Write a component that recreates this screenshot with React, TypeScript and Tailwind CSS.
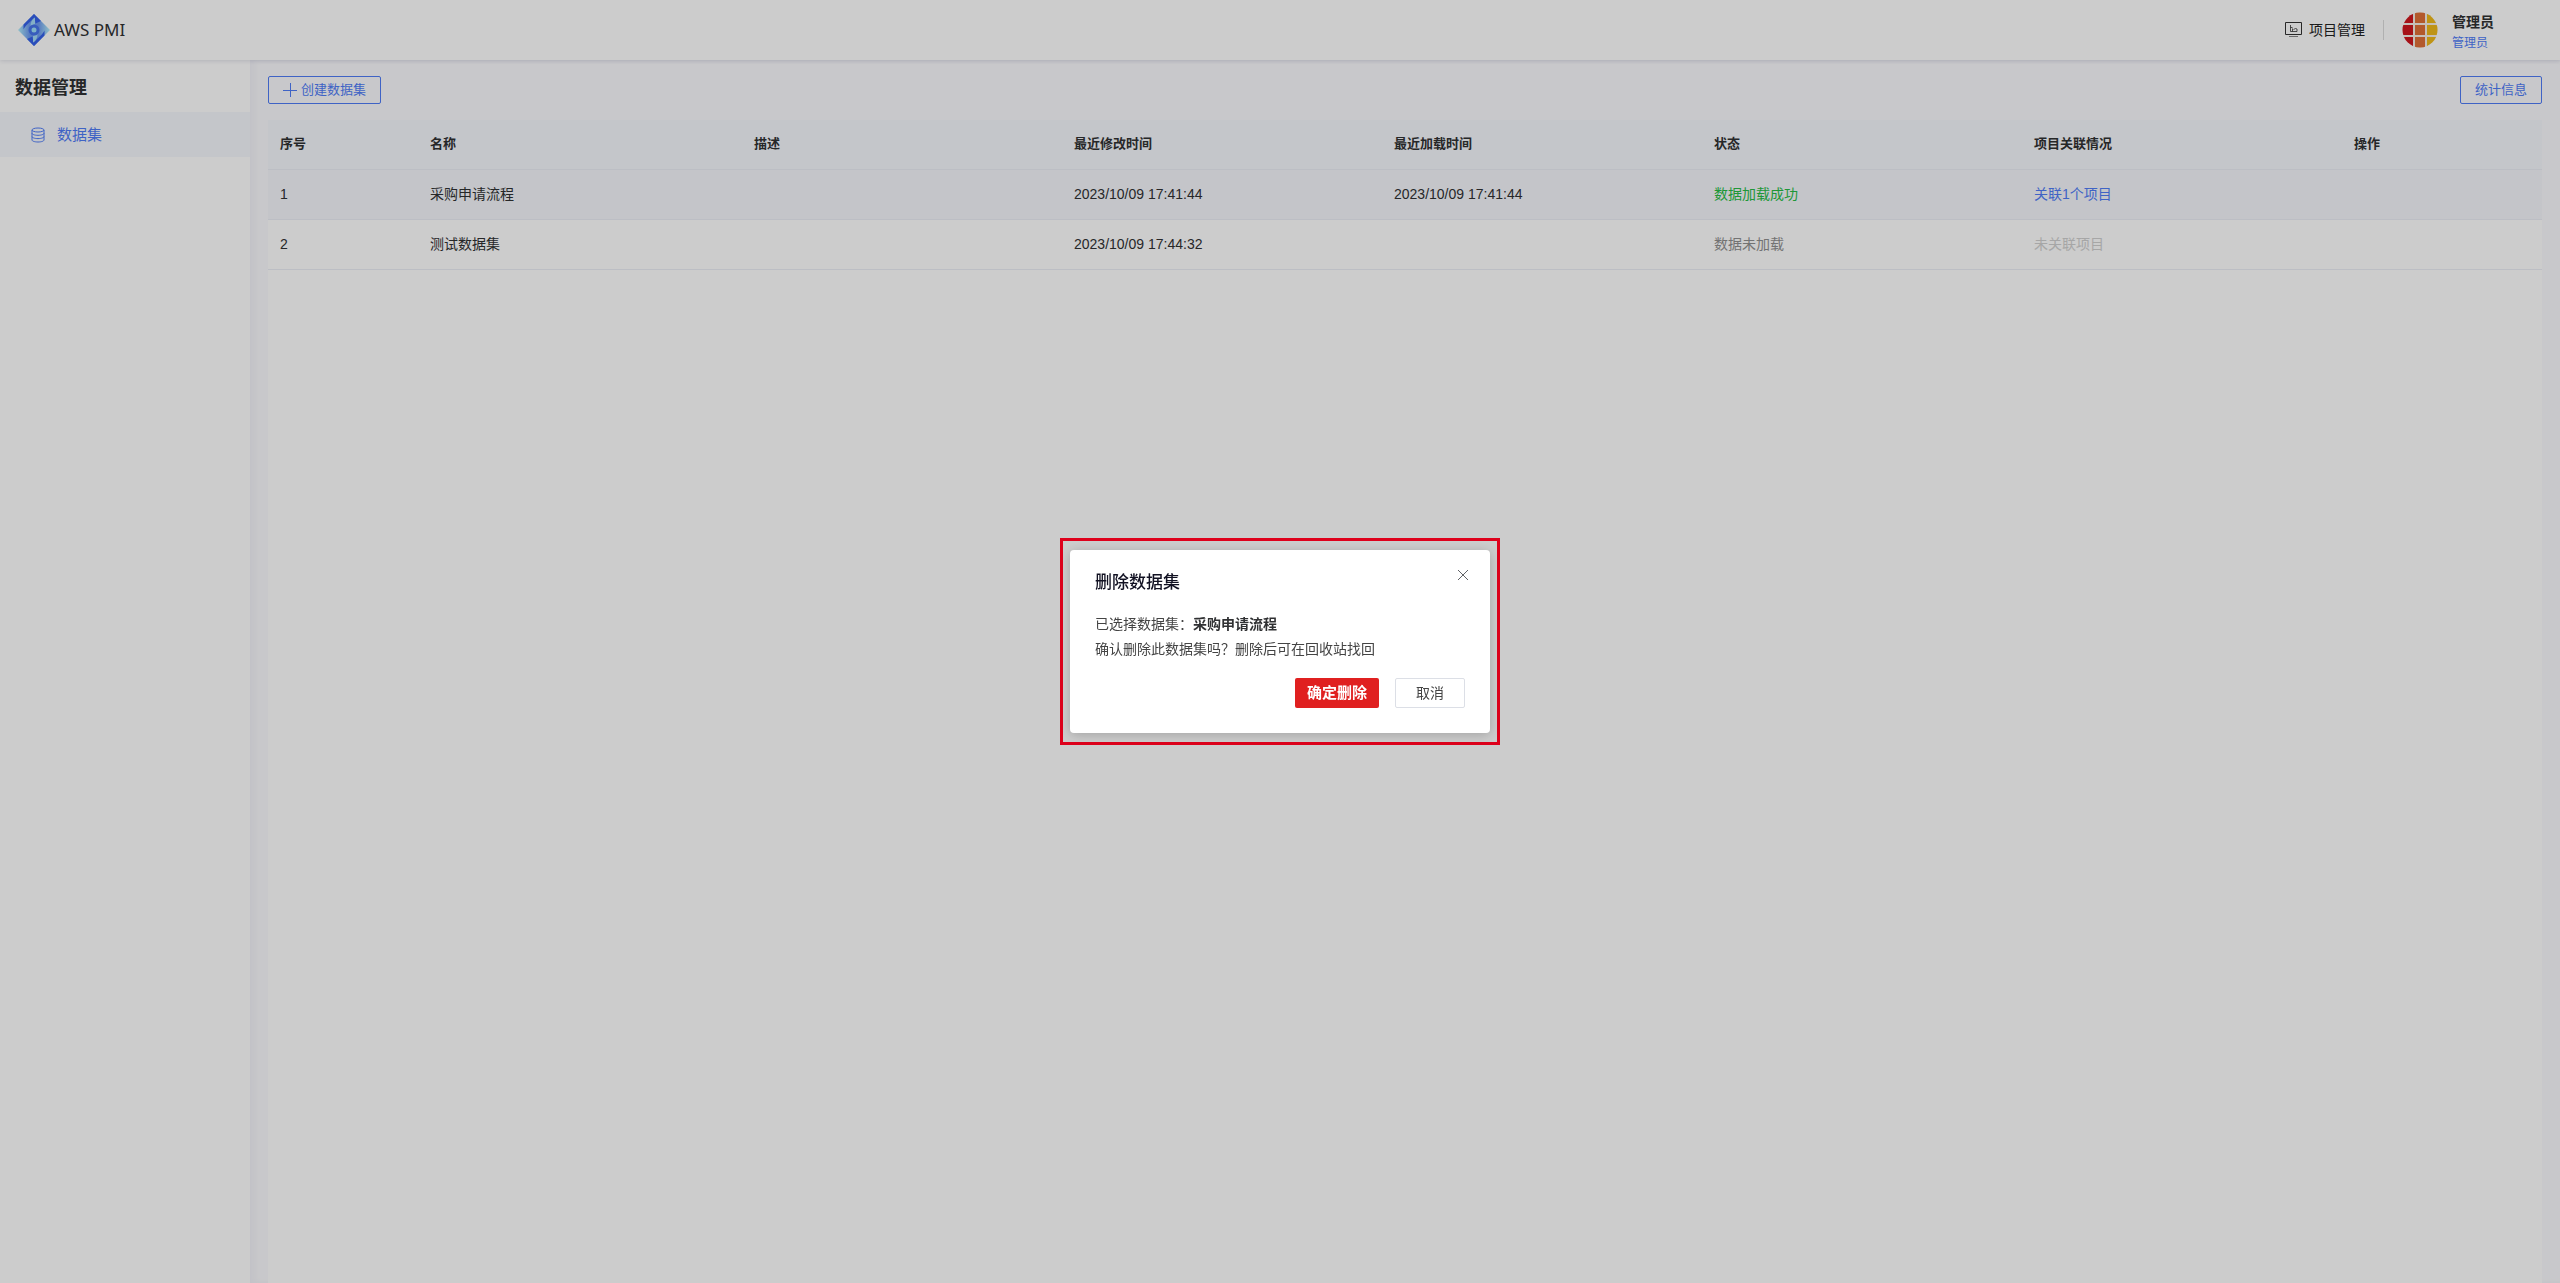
import React, { useState } from 'react';

interface DataSet {
  id: number;
  name: string;
  description: string;
  updatedAt: string;
  loadedAt: string;
  loaded: boolean;
  projects: number;
}

const DATA_SETS: DataSet[] = [
  { id: 1, name: '采购申请流程', description: '', updatedAt: '2023/10/09 17:41:44', loadedAt: '2023/10/09 17:41:44', loaded: true, projects: 1 },
  { id: 2, name: '测试数据集', description: '', updatedAt: '2023/10/09 17:44:32', loadedAt: '', loaded: false, projects: 0 },
];

const COLUMNS = [
  { label: '序号', width: 'w-[150px]' },
  { label: '名称', width: 'w-[324px]' },
  { label: '描述', width: '' },
  { label: '最近修改时间', width: '' },
  { label: '最近加载时间', width: '' },
  { label: '状态', width: '' },
  { label: '项目关联情况', width: '' },
  { label: '操作', width: 'w-[200px]' },
];

function Logo() {
  return (
    <svg width="32" height="32" viewBox="0 0 32 32" aria-hidden="true">
      <defs>
        <linearGradient id="logoBase" x1="0" y1="0" x2="1" y2="0">
          <stop offset="0" stopColor="#b4f0fb" />
          <stop offset="0.35" stopColor="#6f9cf0" />
          <stop offset="0.65" stopColor="#6f9cf0" />
          <stop offset="1" stopColor="#b4f0fb" />
        </linearGradient>
      </defs>
      <path d="M16 0 32 16 16 32 0 16z" fill="url(#logoBase)" />
      <path d="M16 0 5.5 10.5v5C7 12 11 9 16.500 3.500l1 6 5.500-2.500z" fill="#3561ea" />
      <path d="M16 32l10.500-10.500v-5C25 20 21 23 15.500 28.500l-1-6L9 25z" fill="#3561ea" />
      <path d="M17 3.500c-3 2-4.500 4.500-4.500 8.500l4.500-2z" fill="#a5dcf8" />
      <path d="M15 28.500c3-2 4.500-4.500 4.500-8.500L15 22z" fill="#a5dcf8" />
      <circle cx="16" cy="16" r="4" fill="#9fe0fa" stroke="#4674ec" strokeWidth="3" />
    </svg>
  );
}

function Avatar() {
  return (
    <svg width="36" height="36" viewBox="0 0 36 36" aria-hidden="true">
      <defs>
        <clipPath id="avatarClip">
          <circle cx="18" cy="18" r="17.5" />
        </clipPath>
      </defs>
      <g clipPath="url(#avatarClip)">
        <rect width="36" height="36" fill="#f7efe8" />
        <path d="M0 0h11v11H0zM0 13h11v10H0zM0 25h11v11H0z" fill="#d0171f" />
        <path d="M13 0h10v11H13zM13 13h10v10H13zM13 25h10v11H13z" fill="#e07038" />
        <path d="M25 0h11v11H25zM25 13h11v10H25zM25 25h11v11H25z" fill="#efb91b" />
      </g>
    </svg>
  );
}

function ProjectIcon() {
  return (
    <svg width="17" height="16" viewBox="0 0 17 16" fill="none" stroke="#333333" aria-hidden="true">
      <path d="M.5.5h16v12H.5z" />
      <path d="M5.5 3v6.500h6.500M5.500 5.500h2M7.500 6.500v3M8.500 7.500l2-1 1.500.500v2.500" strokeOpacity="0.8" />
      <path d="M4 14.500h9" strokeOpacity="0.6" />
    </svg>
  );
}

function DataIcon() {
  return (
    <svg width="14" height="16" viewBox="0 0 14 16" fill="none" stroke="#4f7cf7" aria-hidden="true">
      <ellipse cx="7" cy="3" rx="6" ry="2" />
      <path d="M1 3v10c0 1.100 2.700 2 6 2s6-.9 6-2V3" />
      <path d="M1 6.300c0 1.100 2.700 2 6 2s6-.9 6-2M1 9.600c0 1.100 2.700 2 6 2s6-.9 6-2" />
    </svg>
  );
}

function Header() {
  return (
    <header className="relative z-10 flex h-[60px] items-center bg-white pl-[18px] pr-[66px] shadow-[0_1px_4px_rgba(40,50,100,0.15)]">
      <Logo />
      <span className="ml-1 font-['Noto_Sans',sans-serif] text-[17px] text-[#303133]">AWS PMI</span>
      <a href="#projects" className="ml-auto flex items-center gap-[7px] text-[#222222]">
        <ProjectIcon />
        <span>项目管理</span>
      </a>
      <div className="ml-[18px] h-5 w-px bg-[#dcdcdc]" />
      <div className="ml-[18px] flex items-center gap-[14px]">
        <Avatar />
        <div className="flex flex-col pt-[3px]">
          <span className="text-sm leading-[22px] font-bold text-[#303133]">管理员</span>
          <span className="text-xs leading-5 text-[#4f7cf7]">管理员</span>
        </div>
      </div>
    </header>
  );
}

function Sidebar() {
  return (
    <aside className="w-[250px] shrink-0 bg-white">
      <h2 className="flex h-[52px] items-center px-[15px] pt-[3px] text-lg font-bold text-[#303133]">数据管理</h2>
      <nav>
        <a href="#datasets" className="flex h-[45px] items-center gap-3 bg-[#f6f8fd] pl-[31px] text-[15px] text-[#4f7cf7]">
          <DataIcon />
          <span>数据集</span>
        </a>
      </nav>
    </aside>
  );
}

function DataSetTable({ rows, activeId }: { rows: DataSet[]; activeId: number }) {
  return (
    <table className="w-full table-fixed border-collapse text-left text-sm text-[#303133]">
      <thead>
        <tr className="h-[49px] border-b border-[#ebeef5] bg-[#f6f8fd]">
          {COLUMNS.map((col) => (
            <th key={col.label} className={`px-3 text-[13px] font-bold ${col.width}`}>{col.label}</th>
          ))}
        </tr>
      </thead>
      <tbody>
        {rows.map((row) => (
          <tr key={row.id} className={`h-[50px] border-b border-[#ebeef5] ${row.id === activeId ? 'bg-[#f5f7fc]' : 'bg-white'}`}>
            <td className="px-3">{row.id}</td>
            <td className="px-3">{row.name}</td>
            <td className="px-3">{row.description}</td>
            <td className="px-3">{row.updatedAt}</td>
            <td className="px-3">{row.loadedAt}</td>
            <td className={`px-3 ${row.loaded ? 'text-[#27bd45]' : 'text-[#909090]'}`}>
              {row.loaded ? '数据加载成功' : '数据未加载'}
            </td>
            <td className="px-3">
              {row.projects > 0 ? (
                <a href="#related" className="text-[#4f7cf7]">关联{row.projects}个项目</a>
              ) : (
                <span className="text-[#d0d0d0]">未关联项目</span>
              )}
            </td>
            <td className="px-3" />
          </tr>
        ))}
      </tbody>
    </table>
  );
}

function DeleteDialog({ name, onClose }: { name: string; onClose: () => void }) {
  return (
    <div className="fixed inset-0 z-20 flex items-center justify-center bg-black/20">
      <div className="border-[3px] border-[#de001b] px-[7px] py-[9px]">
        <div role="dialog" aria-labelledby="dialog-title" className="w-[420px] rounded bg-white px-[25px] pt-4 pb-[25px] shadow-[0_2px_12px_rgba(0,0,0,0.2)]">
          <div className="flex items-start justify-between">
            <h3 id="dialog-title" className="pt-[3px] text-[17px] leading-7 font-medium text-[#111122]">删除数据集</h3>
            <button onClick={onClose} aria-label="关闭" className="mr-[-7px] p-[3px]">
              <svg width="12" height="12" viewBox="0 0 12 12" stroke="#606266">
                <path d="M1 1l10 10M11 1 1 11" />
              </svg>
            </button>
          </div>
          <p className="mt-[15px] text-sm leading-[25px] text-[#444444]">
            已选择数据集：<b className="font-bold text-[#303133]">{name}</b>
          </p>
          <p className="text-sm leading-[25px] text-[#444444]">确认删除此数据集吗？删除后可在回收站找回</p>
          <div className="mt-4 flex justify-end gap-4">
            <button onClick={onClose} className="h-[30px] w-[84px] rounded-xs bg-[#e02020] text-[15px] font-bold text-white">确定删除</button>
            <button onClick={onClose} className="h-[30px] w-[70px] rounded-xs border border-[#dcdfe6] text-sm text-[#444444]">取消</button>
          </div>
        </div>
      </div>
    </div>
  );
}

export default function App() {
  const [selected, setSelected] = useState<DataSet | null>(DATA_SETS[0]);

  return (
    <div className="flex min-h-screen flex-col bg-[#fbfbfe] font-['Liberation_Sans','Noto_Sans_CJK_SC',sans-serif] text-sm">
      <Header />
      <div className="flex flex-1">
        <Sidebar />
        <main className="flex min-w-0 flex-1 flex-col px-[18px] shadow-[inset_5px_0_6px_rgba(60,60,120,0.04)]">
          {/* Toolbar */}
          <div className="flex h-[60px] items-center justify-between">
            <button className="flex h-7 items-center gap-1 rounded-xs border border-[#4f7cf7] px-[14px] text-[13px] text-[#4f7cf7]">
              <svg width="14" height="14" viewBox="0 0 14 14" stroke="currentColor">
                <path d="M7.5 0v14M0 7.500h14" />
              </svg>
              创建数据集
            </button>
            <button className="h-7 rounded-xs border border-[#4f7cf7] px-[14px] text-[13px] text-[#4f7cf7]">统计信息</button>
          </div>
          <div className="flex-1 bg-white">
            <DataSetTable rows={DATA_SETS} activeId={1} />
          </div>
        </main>
      </div>
      {selected && <DeleteDialog name={selected.name} onClose={() => setSelected(null)} />}
    </div>
  );
}
